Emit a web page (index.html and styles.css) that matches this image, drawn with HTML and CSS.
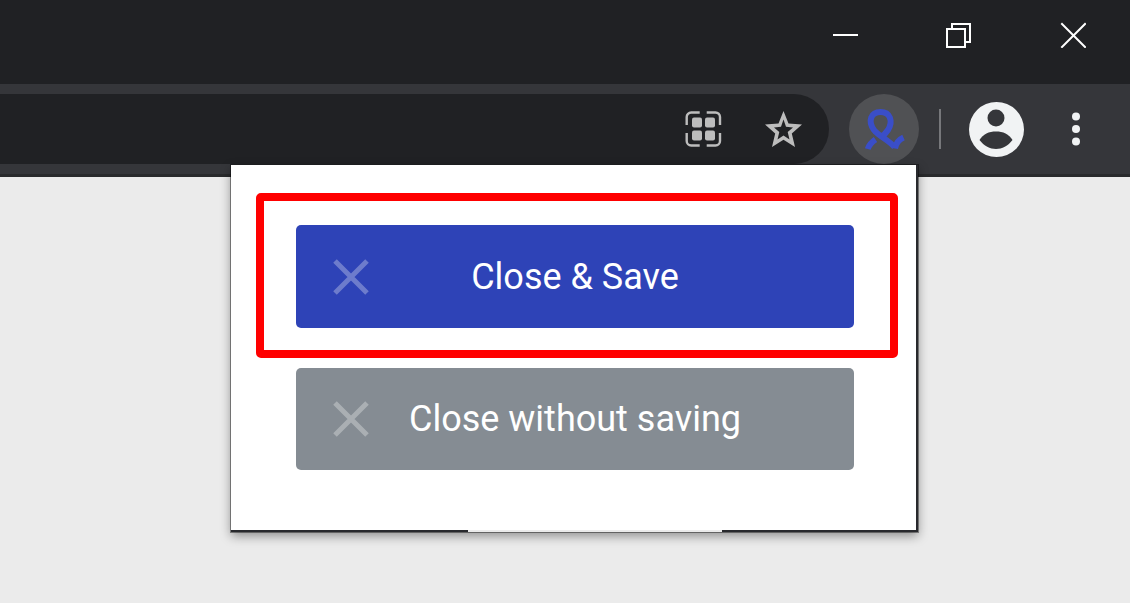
FILE: index.html
```html
<!DOCTYPE html>
<html lang="en">

<head>
  <meta charset="UTF-8">
  <meta name="viewport" content="width=device-width, initial-scale=1.0">
  <title>Close &amp; Save</title>
  <link rel="stylesheet" href="styles.css">
</head>

<body>
  <header class="browser">
    <div class="titlebar">
      <button class="window-btn" type="button" aria-label="Minimize">
        <svg width="26" height="26" viewBox="0 0 26 26">
          <path d="M1 12h25v2H1z" fill="#fff"/>
        </svg>
      </button>
      <button class="window-btn" type="button" aria-label="Restore">
        <svg width="26" height="26" viewBox="0 0 26 26" fill="none" stroke="#fff" stroke-width="2">
          <path d="M1 7h18v18H1z"/>
          <path d="M6 7V2h18v18h-5"/>
        </svg>
      </button>
      <button class="window-btn" type="button" aria-label="Close">
        <svg width="26" height="26" viewBox="0 0 26 26" stroke="#fff" stroke-width="2">
          <path d="M2 2l23 23M25 2L2 25" stroke-linecap="square"/>
        </svg>
      </button>
    </div>

    <div class="toolbar">
      <div class="omnibox">
        <button class="icon-btn" type="button" aria-label="QR code">
          <svg width="37" height="37" viewBox="0 0 37 37">
            <g fill="none" stroke="#bdbdbd" stroke-width="2.4">
              <path d="M1.700 14V6a4.500 4.500 0 0 1 4.500-4.500h8.500"/>
              <path d="M21.700 1.500h8.500A4.500 4.500 0 0 1 35 6v8"/>
              <path d="M35 22v8a4.500 4.500 0 0 1-4.500 4.500h-8.800"/>
              <path d="M14.700 34.500H6.200A4.500 4.500 0 0 1 1.700 30v-8"/>
            </g>
            <g fill="#bdbdbd">
              <rect x="7" y="6.500" width="10" height="10" rx="2"/>
              <rect x="20" y="6.500" width="10" height="10" rx="2"/>
              <rect x="7" y="19.500" width="10" height="10" rx="2"/>
              <rect x="20" y="19.500" width="10" height="10" rx="2"/>
            </g>
          </svg>
        </button>
        <button class="icon-btn" type="button" aria-label="Bookmark">
          <svg width="37" height="37" viewBox="0 0 37 37">
            <path fill="#bdbdbd" fill-rule="evenodd" d="M18.500 0L23.500 12.500L37 13.500L26.800 22.500L30 36L18.500 28.800L7 36L10.200 22.500L0 13.500L13.500 12.500zM18.500 8.500L16 15.800L9 16.400L14.300 21.100L12.500 28.500L18.500 24.600L24.500 28.500L22.700 21.100L28 16.400L21 15.800z"/>
          </svg>
        </button>
      </div>

      <button class="extension" type="button" aria-label="Extension">
        <svg width="70" height="70" viewBox="0 0 70 70" fill="none" stroke="#3a4ec8" stroke-width="6">
          <path d="M45.500 53C39 45.500 30 42.500 25 36C18.500 27 22 18 31.500 18S44.500 27 39 36C37 39 35 41 32 43"/>
          <path d="M54.500 43.500C50 45.500 47 49 46 54.500"/>
          <path d="M26.500 45.500C22 48.500 20 51 18.800 55"/>
        </svg>
      </button>
      <span class="divider"></span>
      <button class="profile" type="button" aria-label="Profile">
        <svg width="55" height="55" viewBox="0 0 55 55">
          <circle cx="27.500" cy="27.500" r="27.500" fill="#f1f3f4"/>
          <circle cx="27" cy="16" r="8.500" fill="#35363a"/>
          <path d="M10.500 38C14 32 20 29.500 27 29.500S40 32 43.500 38C39 44 33 47 27 47S15 44 10.500 38z" fill="#35363a"/>
        </svg>
      </button>
      <button class="menu" type="button" aria-label="Menu">
        <svg width="8" height="34" viewBox="0 0 8 34" fill="#f1f3f4">
          <circle cx="4" cy="4.500" r="4"/>
          <circle cx="4" cy="17" r="4"/>
          <circle cx="4" cy="29.500" r="4"/>
        </svg>
      </button>
    </div>

    <div class="popup">
      <div class="highlighted">
        <button class="action save" type="button">
          <svg class="cross" width="36" height="36" viewBox="0 0 36 36" stroke="#fff" stroke-width="5">
            <path d="M2 2l32 32M34 2L2 34"/>
          </svg>
          <span>Close &amp; Save</span>
        </button>
        <span class="marker"></span>
      </div>
      <button class="action discard" type="button">
        <svg class="cross" width="36" height="36" viewBox="0 0 36 36" stroke="#fff" stroke-width="5">
          <path d="M2 2l32 32M34 2L2 34"/>
        </svg>
        <span>Close without saving</span>
      </button>
      <span class="edge-gap"></span>
    </div>
  </header>
</body>

</html>
```
FILE: styles.css
```css
body {
  margin: 0;
  min-height: 100vh;
  font-family: Roboto, sans-serif;
  background-color: #ebebeb;
}

button {
  margin: 0;
  padding: 0;
  border: none;
  background: none;
  font-family: inherit;
  cursor: pointer;
}

svg {
  display: block;
}

.browser {
  position: relative;
}

.titlebar {
  display: flex;
  justify-content: flex-end;
  height: 84px;
  background-color: #202124;
}

.window-btn {
  display: flex;
  align-items: center;
  justify-content: center;
  width: 114px;
  height: 70px;
}

.toolbar {
  display: flex;
  align-items: center;
  height: 90px;
  padding-right: 50px;
  background-color: #35363a;
  border-bottom: 3px solid #292a2c;
}

.omnibox {
  flex: 1;
  display: flex;
  align-items: center;
  justify-content: flex-end;
  gap: 43px;
  height: 70px;
  padding-right: 27px;
  border-radius: 0 35px 35px 0;
  background-color: #202124;
}

.extension {
  margin-left: 20px;
  border-radius: 50%;
  background-color: #505154;
}

.divider {
  width: 2px;
  height: 40px;
  margin: 0 28px 0 20px;
  background-color: #77787b;
}

.menu {
  margin-left: 48px;
}

/* extension popup */
.popup {
  position: absolute;
  top: 165px;
  right: 212px;
  display: flex;
  flex-direction: column;
  gap: 40px;
  width: 558px;
  padding: 60px 62px 60px 65px;
  border-right: 2px solid #28292d;
  border-bottom: 2px solid #28292d;
  background-color: #fff;
  box-shadow: 0 0 0 1px rgba(0, 0, 0, 0.4), 0 4px 10px rgba(0, 0, 0, 0.4);
}

.edge-gap {
  position: absolute;
  bottom: -2px;
  left: 237px;
  width: 254px;
  height: 2px;
  background-color: #ebebeb;
}

.action {
  display: grid;
  grid-template-columns: 1fr auto 1fr;
  align-items: center;
  width: 100%;
  height: 102px;
  padding: 0 37px;
  border-radius: 5px;
  color: #fff;
  font-size: 36px;
  line-height: 44px;
}

.save {
  height: 103px;
  background-color: #2e43b7;
}

.discard {
  background-color: #858c93;
}

.cross {
  opacity: 0.3;
}

.highlighted {
  position: relative;
}

.marker {
  position: absolute;
  inset: -32px -44px -30px -40px;
  border: 8px solid #f00;
  border-radius: 5px;
  pointer-events: none;
}
```
